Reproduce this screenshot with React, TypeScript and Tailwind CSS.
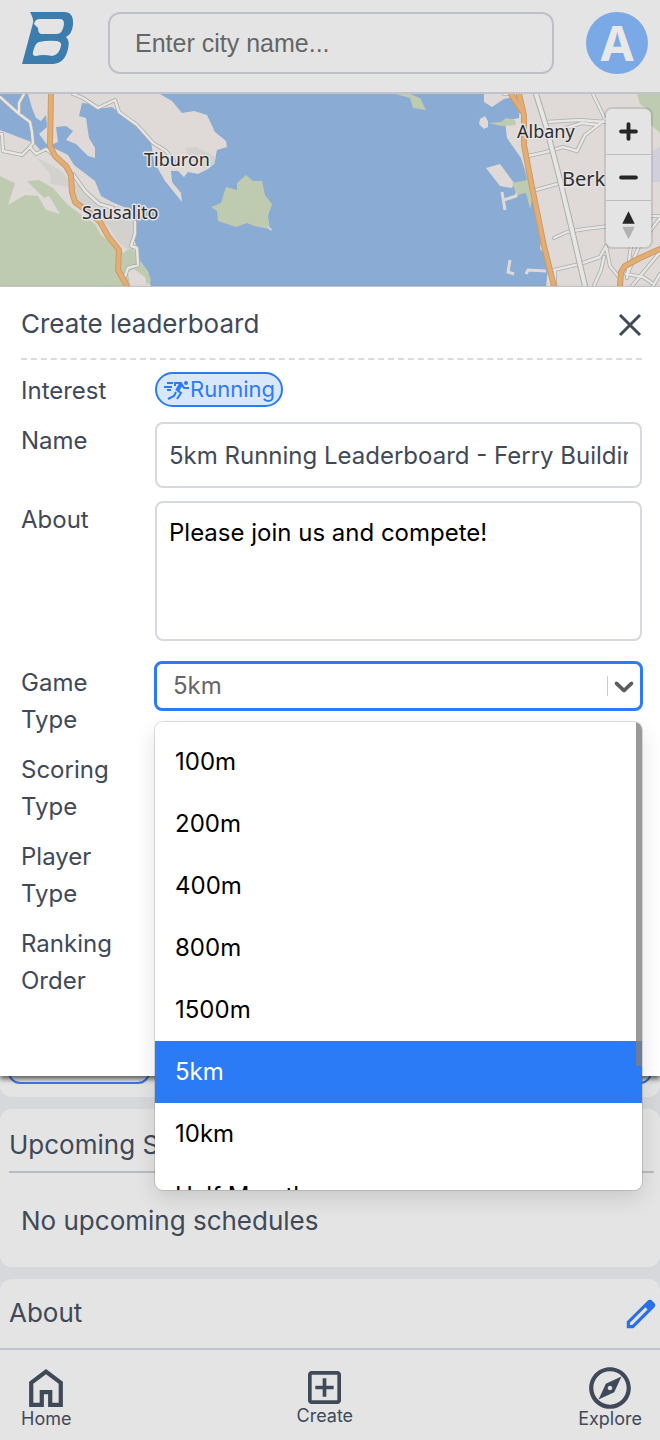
import type { ReactNode } from 'react';
import { MdOutlineExplore } from 'react-icons/md';

const GAME_TYPES = ['100m', '200m', '400m', '800m', '1500m', '5km', '10km', 'Half Marathon'];

const SMALL_ROADS =
	'M0 97L18 113L30 122L32 132L33 143L30 147L22 155L3 151L2 134H0M24 94L19 103V114M30 147L36 154L46 149L54 155M73 94L83 98L98 108L115 100L119 112L137 125L153 143L166 151L174 161M73 174L85 191L99 204L113 208M135 222L135 234L131 246L137 248L138 265L128 268L125 276M504 94H516M528 156L546 152L563 147L577 151L585 135L602 122L605 119L593 94M546 122L580 120L606 122M566 128L582 123L598 125M532 191L561 183M554 238L567 232L585 229L610 226M554 270L580 264L600 257L606 246L610 266L618 276M604 257L601 270L594 286M632 286L660 252M628 273L640 244L660 218M653 286L660 274M626 274L643 277L652 283M555 286V272M631 245L627 278M650 216H660';
const MAIN_ROAD = 'M536 94L546 126L559 176L572 230L585 286';
const HIGHWAYS =
	'M51 94L50 146L55 156L66 166L71 175L72 192L75 202L90 213L100 222L108 236L119 250L118 270L127 286M519 94L524 115L524 145L531 182L544 246L554 286M511 94L522 111M620 286L621 272L625 266L640 258L660 249';

const Logo = () => (
	<svg viewBox="0 0 52 52" className="h-13 w-14" aria-label="Home">
		<path
			fill="#3d7dae"
			fillRule="evenodd"
			d="M8 0H42Q52 0 51 13Q50 22 44 25Q48 28 46 37Q43 51 31 52H0L11 11Q12 7 8 0ZM12 12Q13 7 18 7H38Q42 7 42 12Q41 22 34 22H20Q16 22 16 16ZM17 30Q26 28 35 29Q40 30 39 34Q37 43 30 44Q21 42 14 44Q10 44 11 40Q13 31 17 30Z"
		/>
	</svg>
);

const CityMap = () => (
	<svg viewBox="0 94 660 192" preserveAspectRatio="xMidYMid slice" className="block h-48 w-full" role="img" aria-label="Map">
		<path fill="#8aabd3" d="M0 94H660V286H0Z" />
		<path
			fill="#dfdad8"
			d="M0 94H28L32 108L36 118L41 121L46 115L47 127L39 134L48 146L58 142L56 127L66 126L73 131L66 140L76 144L88 156L95 158L95 148L89 138L86 118L79 116L82 103L91 104L97 109L112 107L130 120L151 141L154 162L165 181L182 202L181 193L172 182L171 171L178 171L184 177L188 172L198 174L208 169L214 164L217 150L227 147L226 141L215 132L207 115L194 111L182 113L172 101L160 94H0V286H151L140 262L133 233L131 210L112 202L101 196L95 181L74 165L68 155L54 148L42 152L34 143L0 130Z"
		/>
		<path fill="#bfcbb0" d="M0 176L8 180L15 183L8 205L25 195L38 196L46 210L60 214L49 196L44 198L27 181L39 180L53 188L68 205L83 216L95 224L101 235L116 247L123 253L132 247L139 259L148 271L151 281L145 286H0Z" />
		<path fill="#dfdad8" d="M128 272L134 269L145 277L147 286H130Z" />
		<path fill="#d2d1ce" d="M36 157L60 170L68 179L84 188L103 202L119 207L134 215L134 234L128 250L118 242L108 226L82 208L70 198L68 187L51 184L50 174Z" />
		<path fill="#d2d1ce" d="M185 148L196 147L216 157L214 164L205 169L190 160Z" />
		<path fill="#bfcbb0" d="M211 207L221 203L226 187L237 190L237 183L246 175L253 181L262 181L265 195L272 204L268 216L270 229L254 226L247 223L236 227L218 221L217 211Z" />
		<path fill="#dfdad8" d="M266 226L272 229L271 231Z" />
		<path fill="#bfcbb0" d="M395 94H410L420 98L426 110L413 108L410 98Z" />
		<path fill="#dfdad8" d="M484 94H660V286H546L548 270L546 256L540 249L542 232L533 204L527 176L521 158L507 138L505 121L519 118L520 105L514 97L504 99L492 107L484 102Z" />
		<path fill="#dfdad8" d="M480 119L485 116L488 121V127L484 129L479 124ZM486 168L500 164L514 183L512 188L500 186Z" />
		<path fill="none" stroke="#dfdad8" strokeWidth="3" d="M502 192L505 210M504 200L516 196L518 190M510 260L508 272L514 274M526 274L528 270L546 271" />
		<path fill="#bfcbb0" d="M488 123L501 122L506 118L515 120L516 125L502 126ZM512 183L527 180L524 168L531 184L532 200L530 209L526 193L517 195ZM637 94H660V133L650 124L645 117L648 110L640 104Z" />
		<path fill="#d2cfdd" d="M652 152L660 146V182H652Z" />
		<g fill="none" strokeLinejoin="round" strokeLinecap="round">
			<path stroke="#adadac" strokeWidth="4" d={SMALL_ROADS} />
			<path stroke="#e6e6e5" strokeWidth="2.4" d={SMALL_ROADS} />
			<path stroke="#adadac" strokeWidth="6" d={MAIN_ROAD} />
			<path stroke="#e6e6e5" strokeWidth="4" d={MAIN_ROAD} />
			<path stroke="#ce9a66" strokeWidth="6" d={HIGHWAYS} />
			<path stroke="#e3ae74" strokeWidth="4" d={HIGHWAYS} />
		</g>
		<g className="font-['Noto_Sans',sans-serif]" fill="#2d2d2f" stroke="#e4e4e4" strokeWidth="3" strokeLinejoin="round" paintOrder="stroke">
			<text x="144" y="166" fontSize="18">Tiburon</text>
			<text x="82" y="219" fontSize="18">Sausalito</text>
			<text x="517" y="138" fontSize="18">Albany</text>
			<text x="562" y="186" fontSize="20">Berkeley</text>
		</g>
	</svg>
);

const MapButton = ({ label, children }: { label: string; children: ReactNode }) => (
	<button type="button" aria-label={label} className="flex h-[46px] w-[45px] items-center">
		<svg viewBox="0 0 29 29" fill="#262626" className="h-[45px] w-[45px]">
			{children}
		</svg>
	</button>
);

const RunnerIcon = () => (
	<svg viewBox="0 0 27 20" className="h-5 w-[27px]" fill="none" stroke="currentColor" strokeWidth="2">
		<path d="M4 3H10M1 7H9M4 10H8" />
		<path d="M12 6V3H18L21 8H26M13 12L11 16L5 19M14 10L18 13L14 19" />
		<path strokeWidth="4" d="M18 4L14 11" />
		<circle cx="23" cy="3" r="2" fill="currentColor" stroke="none" />
	</svg>
);

const Row = ({ label, htmlFor, children }: { label: string; htmlFor?: string; children?: ReactNode }) => (
	<div className="flex">
		<label htmlFor={htmlFor} className="w-[134px] shrink-0 pr-8 leading-[37px]">
			{label}
		</label>
		<div className="min-w-0 flex-1">{children}</div>
	</div>
);

const GameTypeSelect = () => (
	<div className="relative -mx-px -mt-[3px]">
		<button
			id="game-type"
			type="button"
			aria-haspopup="listbox"
			aria-expanded="true"
			className="flex h-[50px] w-full items-center rounded-lg border-3 border-[#2c7bf6] pl-4 text-left text-[#666666]"
		>
			<span className="flex-1">5km</span>
			<span className="h-5 w-px bg-[#cccccc]" />
			<svg viewBox="0 0 20 20" className="h-8 w-8" fill="#5c5c5c">
				<path d="M4.516 7.548c0.436-0.446 1.043-0.481 1.576 0l3.908 3.747 3.908-3.747c0.533-0.481 1.141-0.446 1.574 0 0.436 0.445 0.408 1.197 0 1.615-0.406 0.418-4.695 4.502-4.695 4.502-0.217 0.223-0.502 0.335-0.787 0.335s-0.57-0.112-0.789-0.335c0 0-4.287-4.084-4.695-4.502s-0.436-1.17 0-1.615z" />
			</svg>
		</button>
		<div className="absolute top-full right-px left-px z-20 mt-[11px] h-[468px] overflow-hidden rounded-lg bg-white text-black shadow-[0_0_0_1px_rgba(0,0,0,0.12),0_8px_22px_rgba(0,0,0,0.12)]">
			<ul role="listbox" aria-label="Game Type" className="pt-[9px]">
				{GAME_TYPES.map((type) => (
					<li
						key={type}
						role="option"
						aria-selected={type === '5km'}
						className={
							type === '5km'
								? 'flex h-[62px] items-center bg-[#2c7bf6] px-5 text-white'
								: 'flex h-[62px] items-center px-5'
						}
					>
						{type}
					</li>
				))}
			</ul>
			<div className="absolute top-0 right-0 h-[344px] w-1.5 bg-[#7f7f7f]/80" />
		</div>
	</div>
);

const NavItem = ({ label, children }: { label: string; children: ReactNode }) => (
	<a href="#" className="flex flex-col items-center text-lg leading-5">
		{children}
		{label}
	</a>
);

export default function App() {
	return (
		<div className="flex min-h-screen flex-col bg-[#d7d8dc] font-['Inter',sans-serif] text-2xl text-[#3f4958]">
			<header className="flex h-[94px] items-start gap-8 border-b-2 border-[#c0c3ca] bg-[#e4e4e4] pt-3 pr-3 pl-5">
				<a href="#">
					<Logo />
				</a>
				<input
					type="text"
					aria-label="City name"
					placeholder="Enter city name..."
					className="h-[62px] min-w-0 flex-1 rounded-xl border-2 border-[#bfc1c8] px-[25px] font-['Liberation_Sans',sans-serif] text-[25px] placeholder:text-[#666666]"
				/>
				<button type="button" className="h-[62px] w-[62px] rounded-full bg-[#7ba9e6] font-['Noto_Sans',sans-serif] text-5xl leading-none font-bold text-[#e8e8e8]">
					A
				</button>
			</header>

			<div className="relative h-[193px] overflow-hidden border-b border-[#cfcfcf]">
				<CityMap />
				<div className="absolute top-[15px] right-[9px] divide-y divide-[#bdbdbd] overflow-hidden rounded-md bg-[#e4e4e4] shadow-[0_0_0_2px_rgba(0,0,0,0.1)]">
					<MapButton label="Zoom in">
						<path d="M14.5 8.5c-.75 0-1.25.5-1.25 1.25v3.5h-3.5c-.75 0-1.25.5-1.25 1.25s.5 1.25 1.25 1.25h3.5v3.5c0 .75.5 1.25 1.25 1.25s1.25-.5 1.25-1.25v-3.5h3.5c.75 0 1.25-.5 1.25-1.25s-.5-1.25-1.25-1.25h-3.5v-3.5c0-.75-.5-1.25-1.25-1.25z" />
					</MapButton>
					<MapButton label="Zoom out">
						<path d="M9.75 13.25c-.75 0-1.25.5-1.25 1.25s.5 1.25 1.25 1.25h9.5c.75 0 1.25-.5 1.25-1.25s-.5-1.25-1.25-1.25z" />
					</MapButton>
					<MapButton label="Reset bearing">
						<path d="m10.5 14 4-8 4 8z" />
						<path d="m10.5 16 4 8 4-8z" fill="#b2b2b2" />
					</MapButton>
				</div>
			</div>

			<section className="relative z-10 h-[789px] bg-white pr-[18px] pl-[21px] shadow-[0_3px_5px_rgba(0,0,0,0.6)]">
				<div className="flex h-[73px] items-center justify-between border-b-2 border-dashed border-[#dadbe0] pt-1">
					<h2 className="text-[26px]">Create leaderboard</h2>
					<button type="button" aria-label="Close">
						<svg viewBox="0 0 24 24" className="h-6 w-6" fill="none" stroke="currentColor" strokeWidth="3">
							<path d="M2 2L22 22M22 2L2 22" />
						</svg>
					</button>
				</div>
				<form className="mt-3 flex flex-col gap-[13px]">
					<Row label="Interest">
						<span className="inline-flex h-[35px] items-center rounded-full border-2 border-[#2c7bf6] bg-[#d9e7fb] px-1.5 text-[22px] text-[#2c7bf6]">
							<RunnerIcon />
							Running
						</span>
					</Row>
					<Row label="Name" htmlFor="name">
						<input id="name" type="text" defaultValue="5km Running Leaderboard - Ferry Building" className="h-[66px] w-full rounded-lg border-2 border-[#d6d9de] px-3" />
					</Row>
					<Row label="About" htmlFor="about">
						<textarea id="about" defaultValue="Please join us and compete!" className="mb-2.5 block h-[140px] w-full resize-none rounded-lg border-2 border-[#d6d9de] px-3 py-3.5 text-black" />
					</Row>
					<Row label="Game Type" htmlFor="game-type">
						<GameTypeSelect />
					</Row>
					<Row label="Scoring Type" />
					<Row label="Player Type" />
					<Row label="Ranking Order" />
				</form>
			</section>

			<div className="flex h-[21px] items-end justify-between overflow-hidden rounded-b-xl bg-[#e4e4e4] px-2 pb-[13px]">
				<div className="h-10 w-[142px] rounded-xl border-2 border-[#3f78da]" />
				<div className="h-10 w-[142px] rounded-xl border-2 border-[#3f78da]" />
			</div>

			<section className="mt-3 h-[158px] rounded-xl bg-[#e4e4e4] pr-1.5 pl-[9px]">
				<h2 className="h-16 border-b-2 border-[#b8bbc3] pt-4 text-[26px] leading-10">Upcoming Schedules</h2>
				<p className="px-3 pt-7 text-[26px] leading-10">No upcoming schedules</p>
			</section>

			<section className="mt-3 flex h-[69px] items-center justify-between rounded-t-xl bg-[#e4e4e4] pl-[9px]">
				<h2 className="text-[26px]">About</h2>
				<button type="button" aria-label="Edit about">
					<svg viewBox="0 -960 960 960" className="h-[38px] w-[38px]" fill="#2b6fe8">
						<path d="M200-200h57l391-391-57-57-391 391v57Zm-80 80v-170l528-527q12-11 26.5-17t30.5-6q16 0 31 6t26 18l55 56q12 11 17.5 26t5.5 30q0 16-5.5 30.5T817-647L290-120H120Z" />
					</svg>
				</button>
			</section>

			<nav className="sticky bottom-0 z-10 mt-auto flex h-[92px] justify-between border-t-2 border-[#c0c3ca] bg-[#e4e4e4] pt-[13px] pr-[18px] pl-[21px]">
				<NavItem label="Home">
					<svg viewBox="160 -840 640 720" className="mt-1.5 mb-0.5 h-[38px] w-[34px]" fill="currentColor">
						<path d="M240-200h120v-240h240v240h120v-360L480-740 240-560v360Zm-80 80v-480l320-240 320 240v480H520v-240h-80v240H160Z" />
					</svg>
				</NavItem>
				<NavItem label="Create">
					<svg viewBox="120 -840 720 720" className="mt-2 mb-0.5 h-[33px] w-[33px]" fill="currentColor">
						<path d="M440-280h80v-160h160v-80H520v-160h-80v160H280v80h160v160ZM200-120q-33 0-56.500-23.500T120-200v-560q0-33 23.500-56.500T200-840h560q33 0 56.500 23.500T840-760v560q0 33-23.500 56.500T760-120H200Zm0-80h560v-560H200v560Z" />
					</svg>
				</NavItem>
				<NavItem label="Explore">
					<MdOutlineExplore size={50} className="-mb-1" />
				</NavItem>
			</nav>
		</div>
	);
}
